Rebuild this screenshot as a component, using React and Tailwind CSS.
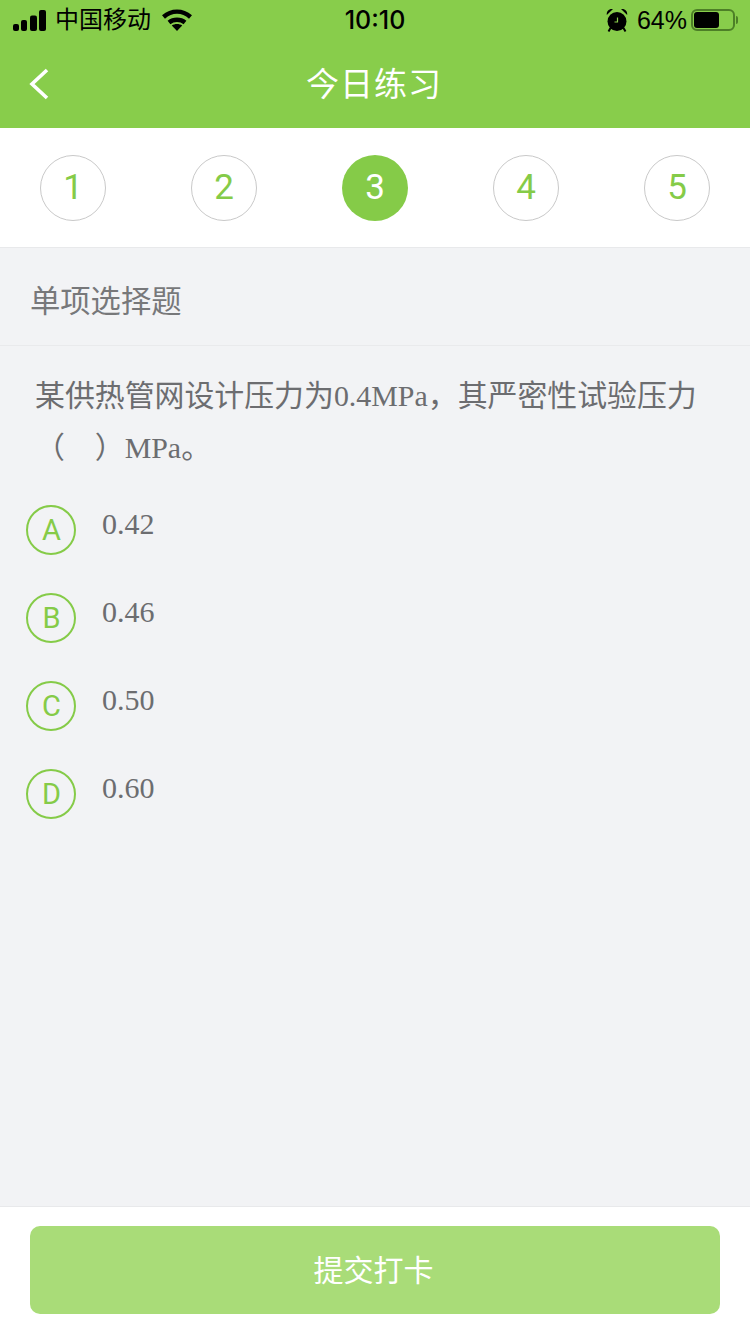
const sans = "font-['Liberation_Sans','Noto_Sans_CJK_SC',sans-serif]";

const steps = [1, 2, 3, 4, 5];
const options = [
  ["A", "0.42"],
  ["B", "0.46"],
  ["C", "0.50"],
  ["D", "0.60"],
];

function Signal() {
  return (
    <svg width="34" height="21" viewBox="0 0 34 21" fill="#000">
      <rect x="0" y="14" width="6" height="7" rx="2" />
      <rect x="8" y="10" width="6" height="11" rx="2" />
      <rect x="17" y="5.5" width="7" height="15.5" rx="2" />
      <rect x="26" y="0" width="7" height="21" rx="2" />
    </svg>
  );
}

function Wifi() {
  return (
    <svg width="30" height="22" viewBox="0 0 30 22" fill="none" stroke="#000" strokeWidth="4.4">
      <path d="M1.5 8C9.5 .8 20.5 .8 28.5 8" />
      <path d="M7 13.5C11.5 9.8 18.5 9.8 23 13.5" />
      <path d="M15 22L9.8 16.6C12.5 14.6 17.5 14.6 20.2 16.6Z" fill="#000" stroke="none" />
    </svg>
  );
}

function Alarm() {
  return (
    <svg width="22" height="24" viewBox="0 0 22 24" fill="#000">
      <circle cx="11" cy="13.5" r="9.5" />
      <path d="M.8 7C.4 3 3 .4 7 1ZM21.2 7C21.6 3 19 .4 15 1Z" />
      <path d="M4.5 20L2.5 23.5M17.5 20L19.5 23.5" stroke="#000" strokeWidth="2" />
      <path d="M11.5 9.5V14H8.5" stroke="#8acd4c" strokeWidth="1.2" fill="none" />
    </svg>
  );
}

function Battery() {
  return (
    <div className="flex items-center gap-[1px]">
      <div className="flex h-[22px] w-[44px] items-center rounded-[6px] border-2 border-[#4d7f27] p-[1px]">
        <div className="h-[16px] w-[25px] rounded-[3px] bg-black" />
      </div>
      <div className="h-[8px] w-[2px] rounded-r-sm bg-[#4d7f27]" />
    </div>
  );
}

function StatusBar() {
  return (
    <div className={`relative flex h-[40px] items-center justify-between pl-[13px] pr-[12px] text-black ${sans}`}>
      <div className="flex items-center">
        <Signal />
        <span className="ml-[8px] text-[24px] leading-none">中国移动</span>
        <span className="ml-[11px]"><Wifi /></span>
      </div>
      <span className="absolute left-0 right-0 text-center font-['Inter',sans-serif] text-[25px] font-medium leading-none">10:10</span>
      <div className="flex items-center">
        <Alarm />
        <span className="ml-[9px] mr-[4px] text-[25px] leading-none">64%</span>
        <Battery />
      </div>
    </div>
  );
}

function NavBar() {
  return (
    <div className="relative flex h-[88px] items-center justify-center pr-[2px]">
      <svg className="absolute left-[28px] top-[28px]" width="22" height="32" viewBox="0 0 22 32" fill="none" stroke="#fff" strokeWidth="3.6">
        <path d="M19 2L4 16L19 30" />
      </svg>
      <span className="text-[33px] leading-none tracking-[1px] text-white">今日练习</span>
    </div>
  );
}

function StepRow() {
  return (
    <div className="flex h-[120px] items-center justify-between border-b border-[#e8e9eb] bg-white px-[40px] pt-[1px] font-['Roboto',sans-serif]">
      {steps.map((n) =>
        n === 3 ? (
          <div key={n} className="flex size-[66px] items-center justify-center rounded-full bg-[#85cb48] text-[35px] text-white">
            {n}
          </div>
        ) : (
          <div key={n} className="flex size-[66px] items-center justify-center rounded-full border border-[#c9c9c9] text-[35px] text-[#85cb48]">
            {n}
          </div>
        )
      )}
    </div>
  );
}

export default function App() {
  return (
    <div className={`flex h-[1334px] w-[750px] flex-col overflow-hidden bg-[#f2f3f5] ${sans}`}>
      <header className="bg-[#88cd4b]">
        <StatusBar />
        <NavBar />
      </header>
      <StepRow />

      <div className="flex h-[98px] items-center border-b border-[#e9eaec] px-[30px] pt-[12px] text-[30.3px] leading-none text-[#77787a]">
        单项选择题
      </div>

      <main className="flex-1 text-[#6c6d70]">
        <p className="pl-[35px] pr-[30px] pt-[24px] text-[29.9px] leading-[52px] [font-family:'Liberation_Serif','Noto_Sans_CJK_SC',serif]">
          某供热管网设计压力为0.4MPa，其严密性试验压力（ &nbsp;&nbsp;&nbsp;）MPa。
        </p>
        <ul className="mt-[31px] flex flex-col gap-[38px] pl-[26px]">
          {options.map(([letter, value]) => (
            <li key={letter} className="flex h-[50px] items-start">
              <span className="flex size-[50px] items-center justify-center rounded-full border-2 border-[#85cb48] pt-[2px] pl-[1px] font-['Roboto',sans-serif] text-[29px] text-[#85cb48]">
                {letter}
              </span>
              <span className="ml-[26px] -mt-[3px] text-[30px] leading-[44px] [font-family:'Liberation_Serif',serif]">{value}</span>
            </li>
          ))}
        </ul>
      </main>

      <footer className="h-[128px] border-t border-[#e8e9eb] bg-white px-[30px] pt-[19px]">
        <button className="flex h-[88px] w-full items-center justify-center rounded-[10px] bg-[#a9dc78] pt-[1px] pr-[3px] text-[30px] text-white">
          提交打卡
        </button>
      </footer>
    </div>
  );
}
